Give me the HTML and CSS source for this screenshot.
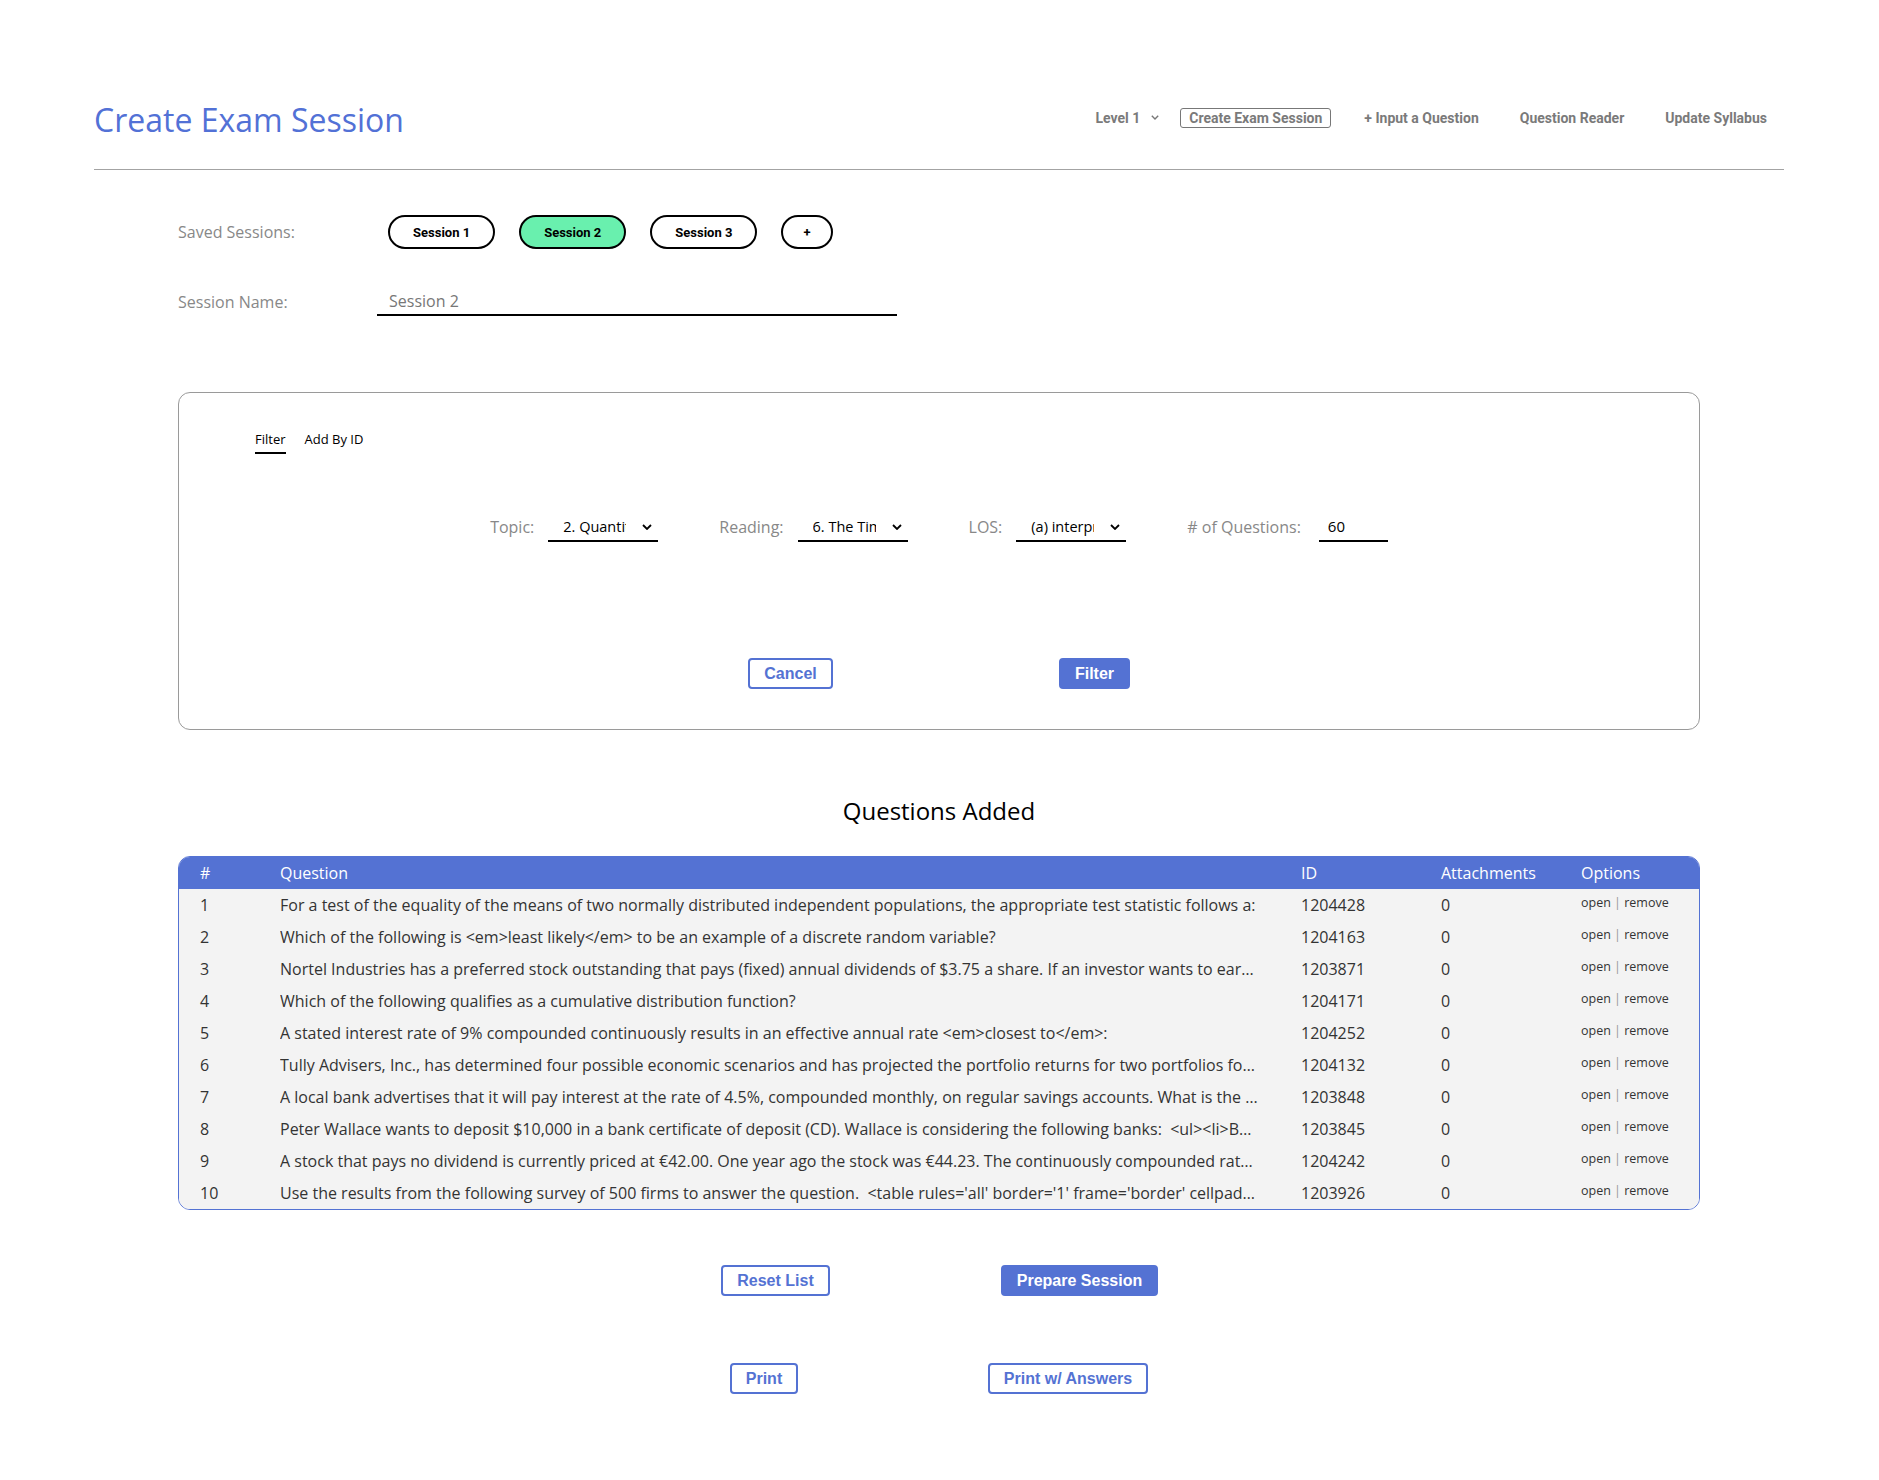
FILE: index.html
```html
<!DOCTYPE html>
<html lang="en">
<head>
<meta charset="utf-8">
<title>Create Exam Session</title>
<link rel="stylesheet" href="styles.css">
</head>
<body>
<div class="page">
  <header class="topbar">
    <h1 class="title">Create Exam Session</h1>
    <nav class="nav">
      <span class="nav-item nav-level">Level 1
        <svg class="nav-chev" width="8" height="5" viewBox="0 0 8 5"><polyline points="0.8,0.8 4,4 7.2,0.8" fill="none" stroke="#777" stroke-width="1.4"/></svg>
      </span>
      <span class="nav-item nav-active">Create Exam Session</span>
      <span class="nav-item nav-input">+ Input a Question</span>
      <span class="nav-item nav-reader">Question Reader</span>
      <span class="nav-item">Update Syllabus</span>
    </nav>
  </header>
  <hr class="rule">

  <main class="content">
    <div class="session-row">
      <span class="label label-saved">Saved Sessions:</span>
      <div class="pills">
        <button class="pill">Session 1</button>
        <button class="pill pill-active">Session 2</button>
        <button class="pill">Session 3</button>
        <button class="pill pill-add">+</button>
      </div>
    </div>

    <div class="name-row">
      <span class="label label-name">Session Name:</span>
      <input class="name-input" type="text" value="Session 2">
    </div>

    <section class="filter-box">
      <div class="tabs">
        <span class="tab tab-active">Filter</span>
        <span class="tab">Add By ID</span>
      </div>
      <div class="filter-row">
        <div class="field">
          <span class="field-label">Topic:</span>
          <div class="select">
            <span class="select-val">2. Quantitative Methods</span>
            <svg class="chev" width="10" height="6" viewBox="0 0 10 6"><polyline points="1,1 5,5 9,1" fill="none" stroke="#000" stroke-width="1.8"/></svg>
          </div>
        </div>
        <div class="field">
          <span class="field-label">Reading:</span>
          <div class="select">
            <span class="select-val">6. The Time Value of Money</span>
            <svg class="chev" width="10" height="6" viewBox="0 0 10 6"><polyline points="1,1 5,5 9,1" fill="none" stroke="#000" stroke-width="1.8"/></svg>
          </div>
        </div>
        <div class="field">
          <span class="field-label">LOS:</span>
          <div class="select">
            <span class="select-val">(a) interpret interest rates</span>
            <svg class="chev" width="10" height="6" viewBox="0 0 10 6"><polyline points="1,1 5,5 9,1" fill="none" stroke="#000" stroke-width="1.8"/></svg>
          </div>
        </div>
        <div class="field field-qty">
          <span class="field-label"># of Questions:</span>
          <input class="qty" type="text" value="60">
        </div>
      </div>
      <div class="btn-row btn-row-box">
        <button class="btn">Cancel</button>
        <button class="btn btn-primary">Filter</button>
      </div>
    </section>

    <h2 class="section-title">Questions Added</h2>

    <div class="table-wrap">
      <table class="qtable">
        <colgroup>
          <col class="c-num"><col class="c-q"><col class="c-id"><col class="c-att"><col class="c-opt">
        </colgroup>
        <thead>
          <tr><th class="num">#</th><th>Question</th><th>ID</th><th>Attachments</th><th>Options</th></tr>
        </thead>
        <tbody>
          <tr><td class="num">1</td><td class="q">For a test of the equality of the means of two normally distributed independent populations, the appropriate test statistic follows a:</td><td>1204428</td><td>0</td><td class="opts">open <span class="sep">|</span> remove</td></tr>
          <tr><td class="num">2</td><td class="q">Which of the following is &lt;em&gt;least likely&lt;/em&gt; to be an example of a discrete random variable?</td><td>1204163</td><td>0</td><td class="opts">open <span class="sep">|</span> remove</td></tr>
          <tr><td class="num">3</td><td class="q">Nortel Industries has a preferred stock outstanding that pays (fixed) annual dividends of $3.75 a share. If an investor wants to earn a rate of return of 8.5%, how much should he be willing to pay?</td><td>1203871</td><td>0</td><td class="opts">open <span class="sep">|</span> remove</td></tr>
          <tr><td class="num">4</td><td class="q">Which of the following qualifies as a cumulative distribution function?</td><td>1204171</td><td>0</td><td class="opts">open <span class="sep">|</span> remove</td></tr>
          <tr><td class="num">5</td><td class="q">A stated interest rate of 9% compounded continuously results in an effective annual rate &lt;em&gt;closest to&lt;/em&gt;:</td><td>1204252</td><td>0</td><td class="opts">open <span class="sep">|</span> remove</td></tr>
          <tr><td class="num">6</td><td class="q">Tully Advisers, Inc., has determined four possible economic scenarios and has projected the portfolio returns for two portfolios for each scenario.</td><td>1204132</td><td>0</td><td class="opts">open <span class="sep">|</span> remove</td></tr>
          <tr><td class="num">7</td><td class="q">A local bank advertises that it will pay interest at the rate of 4.5%, compounded monthly, on regular savings accounts. What is the effective annual rate?</td><td>1203848</td><td>0</td><td class="opts">open <span class="sep">|</span> remove</td></tr>
          <tr><td class="num">8</td><td class="q">Peter Wallace wants to deposit $10,000 in a bank certificate of deposit (CD). Wallace is considering the following banks:  &lt;ul&gt;&lt;li&gt;Bank A offers</td><td>1203845</td><td>0</td><td class="opts">open <span class="sep">|</span> remove</td></tr>
          <tr><td class="num">9</td><td class="q">A stock that pays no dividend is currently priced at €42.00. One year ago the stock was €44.23. The continuously compounded rate of return is</td><td>1204242</td><td>0</td><td class="opts">open <span class="sep">|</span> remove</td></tr>
          <tr><td class="num">10</td><td class="q">Use the results from the following survey of 500 firms to answer the question.  &lt;table rules='all' border='1' frame='border' cellpadding='5'&gt;</td><td>1203926</td><td>0</td><td class="opts">open <span class="sep">|</span> remove</td></tr>
        </tbody>
      </table>
    </div>

    <div class="btn-row btn-row-actions">
      <button class="btn">Reset List</button>
      <button class="btn btn-primary">Prepare Session</button>
    </div>
    <div class="btn-row btn-row-print">
      <button class="btn">Print</button>
      <button class="btn">Print w/ Answers</button>
    </div>
  </main>
</div>
</body>
</html>
```

FILE: styles.css
```css
body {
  margin: 0;
  background: #fff;
  font-family: "Open Sans", "Noto Sans", sans-serif;
  color: #000;
}

.page {
  padding: 0 95px 0 94px;
}

/* ---------- header ---------- */
.topbar {
  display: flex;
  align-items: center;
  justify-content: space-between;
  padding-top: 98px;
}

.title {
  margin: 0;
  font-size: 32px;
  font-weight: 400;
  line-height: 43px;
  color: #5271d6;
}

.nav {
  display: flex;
  align-items: center;
  margin-right: 17px;
  margin-top: -4px;
  font-family: Roboto, "Liberation Sans", sans-serif;
  font-size: 14px;
  font-weight: 700;
  color: #7a7a7a;
}

.nav-item {
  line-height: 16px;
  white-space: nowrap;
}

.nav-level {
  display: flex;
  align-items: center;
  gap: 11px;
  margin-right: 21px;
}

.nav-active {
  border: 1.5px solid #777;
  border-radius: 3px;
  padding: 1px 8px;
  line-height: 16px;
  margin-right: 33px;
}

.nav-input {
  margin-right: 41px;
}

.nav-reader {
  margin-right: 41px;
}

.rule {
  border: 0;
  border-top: 1px solid #a3a3a3;
  margin: 28px 0 0;
  height: 0;
}

/* ---------- content ---------- */
.content {
  margin: 0 84px;
}

.label {
  font-size: 16px;
  color: #888;
  line-height: 22px;
}

.label-saved {
  width: 210px;
  flex: none;
}

.label-name {
  width: 199px;
  flex: none;
}

.session-row {
  display: flex;
  align-items: center;
  margin-top: 45px;
}

.pills {
  display: flex;
  gap: 24px;
}

.pill {
  height: 34px;
  box-sizing: border-box;
  border: 2px solid #000;
  border-radius: 17px;
  background: #fff;
  padding: 0 23px;
  font-family: Roboto, "Liberation Sans", sans-serif;
  font-size: 13px;
  font-weight: 700;
  color: #000;
}

.pill-active {
  background: #69f0ae;
}

.pill-add {
  padding: 0 20px;
}

.name-row {
  display: flex;
  align-items: center;
  margin-top: 39px;
}

.name-input {
  width: 520px;
  height: 28px;
  box-sizing: border-box;
  border: 0;
  border-bottom: 2px solid #000;
  outline: none;
  padding: 0 12px;
  font-family: "Open Sans", sans-serif;
  font-size: 16px;
  color: #777;
  background: transparent;
}

/* ---------- filter box ---------- */
.filter-box {
  margin-top: 76px;
  border: 1px solid #9a9a9a;
  border-radius: 12px;
  padding: 37px 0 40px;
}

.tabs {
  display: flex;
  gap: 19px;
  margin-left: 76px;
}

.tab {
  font-size: 13px;
  line-height: 18px;
  padding-bottom: 4px;
  border-bottom: 2px solid transparent;
  color: #000;
}

.tab-active {
  border-bottom-color: #000;
}

.filter-row {
  display: flex;
  justify-content: center;
  align-items: center;
  gap: 61px;
  margin-top: 58px;
  height: 30px;
}

.field {
  display: flex;
  align-items: center;
  gap: 14px;
}

.field-qty {
  gap: 18px;
}

.field-label {
  font-size: 16px;
  color: #888;
  line-height: 22px;
}

.select {
  width: 110px;
  height: 30px;
  box-sizing: border-box;
  border-bottom: 2px solid #000;
  display: flex;
  align-items: center;
  padding: 1px 6px 0 15px;
}

.select-val {
  width: 63px;
  overflow: hidden;
  white-space: nowrap;
  font-size: 14.5px;
  line-height: 20px;
  color: #000;
}

.chev {
  margin-left: auto;
}

.qty {
  width: 69px;
  height: 30px;
  box-sizing: border-box;
  border: 0;
  border-bottom: 2px solid #000;
  outline: none;
  padding: 0 9px;
  font-family: "Open Sans", sans-serif;
  font-size: 15px;
  color: #000;
  background: transparent;
}

/* ---------- buttons ---------- */
.btn-row {
  display: grid;
  grid-template-columns: 304px 304px;
  justify-content: center;
  justify-items: center;
}

.btn-row-box {
  margin-top: 116px;
  padding-left: 7px;
}

.btn-row-actions {
  margin-top: 55px;
  padding-right: 23px;
}

.btn-row-print {
  margin-top: 67px;
  padding-right: 46px;
}

.btn {
  height: 31px;
  box-sizing: border-box;
  border: 2px solid #5472d3;
  border-radius: 4px;
  background: #fff;
  color: #5472d3;
  padding: 0 14px;
  font-family: "Liberation Sans", Arial, sans-serif;
  font-size: 16px;
  font-weight: 700;
}

.btn-primary {
  background: #5472d3;
  color: #fff;
}

/* ---------- table ---------- */
.section-title {
  margin: 64px 0 0;
  text-align: center;
  font-size: 24px;
  font-weight: 400;
  line-height: 33px;
}

.table-wrap {
  margin-top: 29px;
  border: 1px solid #5472d3;
  border-radius: 12px;
  overflow: hidden;
}

.qtable {
  width: 100%;
  border-collapse: collapse;
  border-spacing: 0;
  table-layout: fixed;
  font-size: 16px;
  line-height: 20px;
}

.c-num { width: 101px; }
.c-q { width: 1021px; }
.c-id { width: 140px; }
.c-att { width: 140px; }

.qtable th {
  background: #5472d3;
  color: #fff;
  font-weight: 400;
  text-align: left;
  height: 32px;
  padding: 0;
}

.qtable td {
  background: #f3f3f3;
  color: #333;
  height: 32px;
  padding: 0;
  white-space: nowrap;
}

.qtable .num {
  padding-left: 21px;
}

.qtable .q {
  white-space: pre;
  overflow: hidden;
  text-overflow: ellipsis;
  padding-right: 42px;
}

.qtable .opts {
  font-size: 12.5px;
  line-height: 14px;
  height: 28px;
  padding-bottom: 4px;
}

.sep {
  color: #999;
}
```
